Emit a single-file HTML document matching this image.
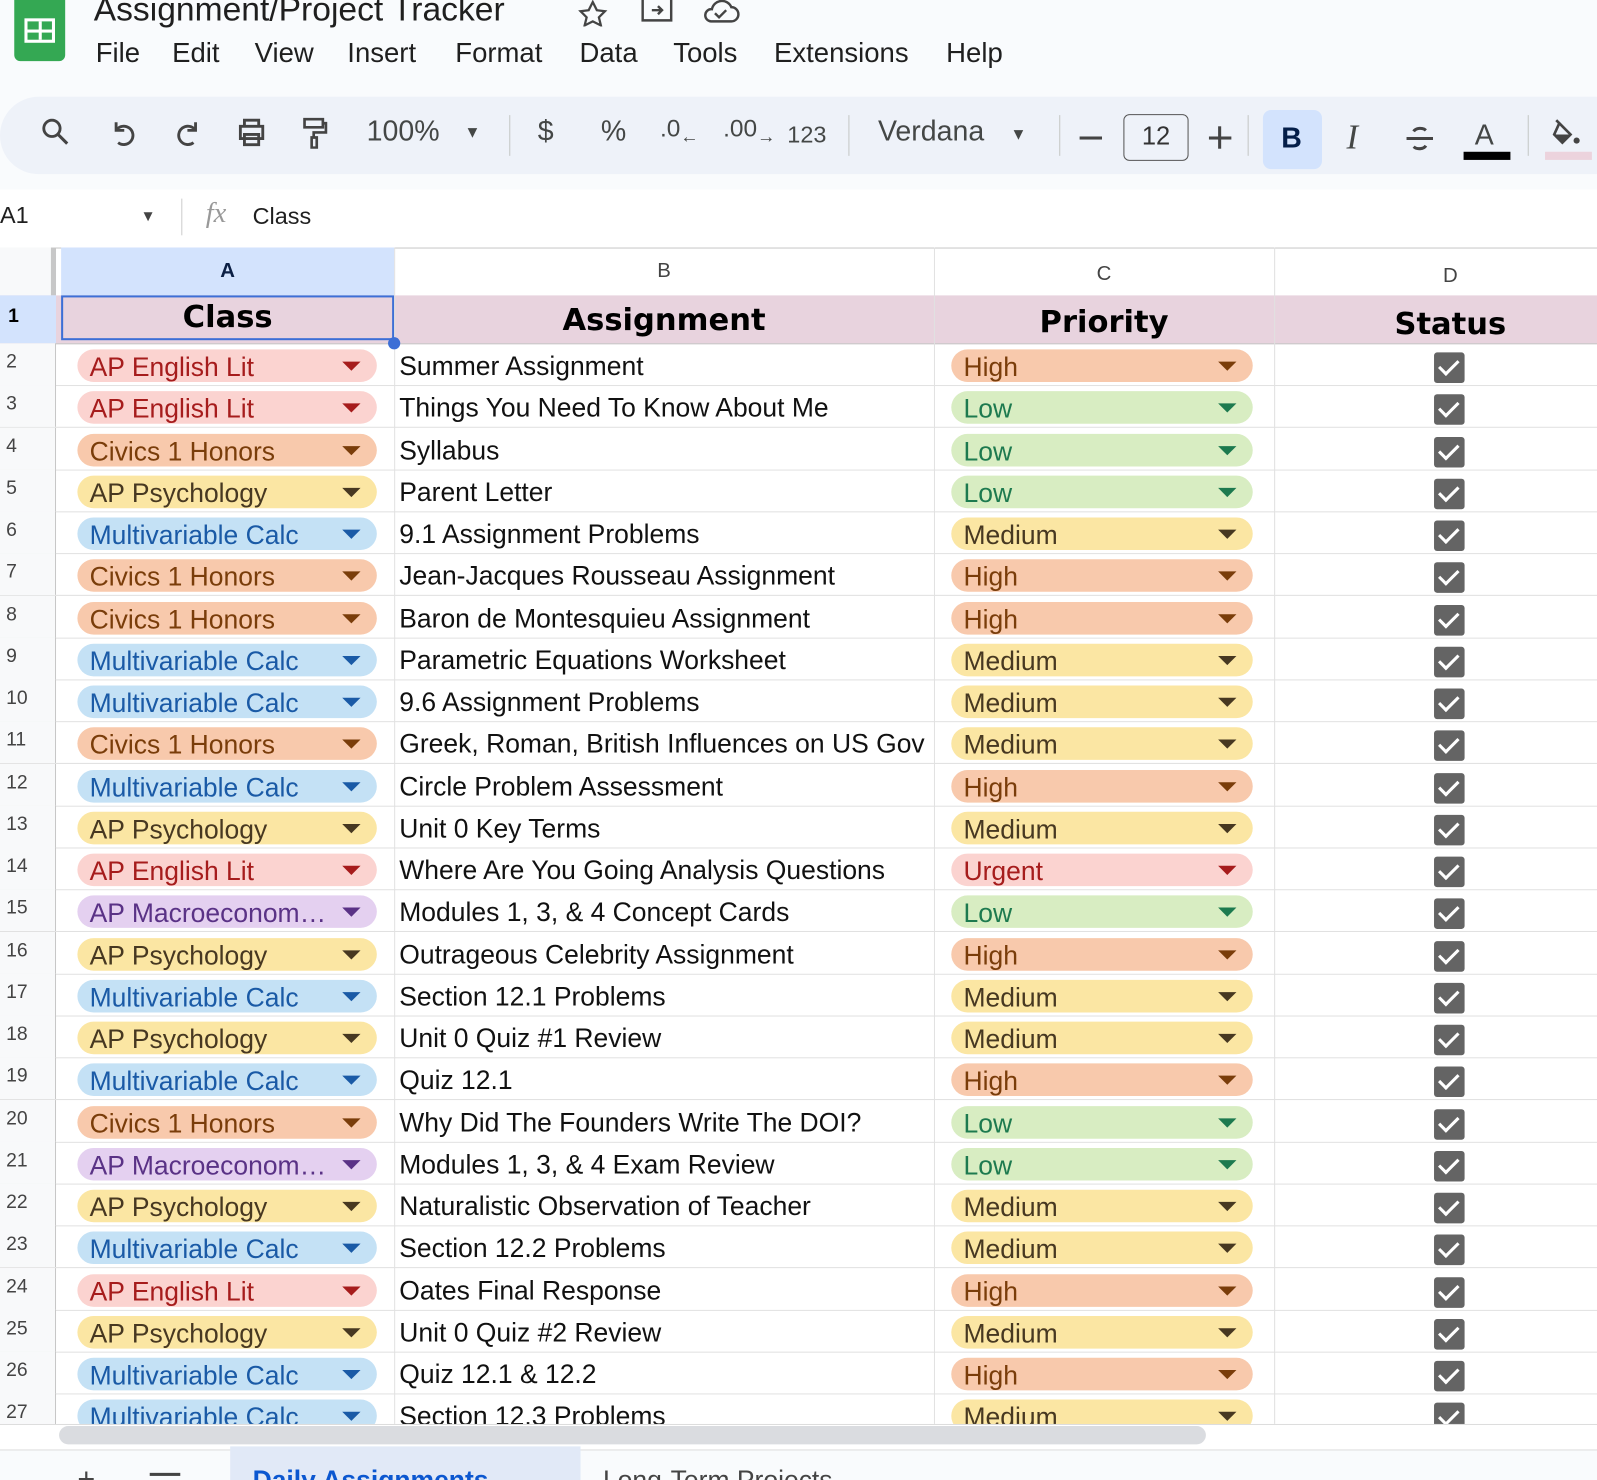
<!DOCTYPE html>
<html><head><meta charset="utf-8">
<style>
html,body{margin:0;padding:0;background:#fff;overflow:hidden;width:1597px;height:1480px}
#w{position:absolute;left:0;top:0;width:1568px;height:1453px;transform:scale(1.01849,1.01858);transform-origin:0 0;font-family:"Liberation Sans",Arial,sans-serif;background:#f9fbfd;overflow:hidden}
.abs{position:absolute}
.mn{position:absolute;top:37px;font-size:27px;color:#1f1f1f}
.tb{position:absolute;top:95px;left:0;width:1568px;height:76px;background:#eef2f9;border-radius:38px 0 0 38px}
.ic{position:absolute;top:113px;font-size:28px;color:#444746}
.sv{position:absolute;top:114px;width:32px;height:32px}
.sep{position:absolute;top:113px;width:1px;height:40px;background:#c4c7c5}
#grid{position:absolute;left:0;top:243px;width:1568px;height:1155px;background:#fff;overflow:hidden}
.r{position:absolute;left:0;width:1568px;height:41px;border-bottom:1px solid #e1e1e1}
.n{position:absolute;left:0;width:55px;height:100%;background:#f8f9fa;border-right:1px solid #c7c7c7;font-size:19px;color:#444;line-height:38px;padding-left:6px;box-sizing:border-box}
.a,.c{position:absolute;top:6px;height:32px;border-radius:16px;font-size:26px;line-height:34px;padding-left:12px;box-sizing:border-box;white-space:nowrap}
.a{left:76px;width:294px}
.c{left:934px;width:296px}
.a:after,.c:after{content:"";position:absolute;right:16px;top:12px;border-left:9px solid transparent;border-right:9px solid transparent;border-top:9px solid currentColor}
.b{position:absolute;left:392px;top:2px;font-size:26px;line-height:41px;color:#111;white-space:nowrap}
.d{position:absolute;left:1408px;top:9px;width:30px;height:30px;background:#646464;border-radius:3px}
.d:after{content:"";position:absolute;left:9px;top:3px;width:8px;height:16px;border-right:3px solid #fff;border-bottom:3px solid #fff;transform:rotate(45deg)}
.vl{position:absolute;top:0;width:1px;height:1155px;background:#e1e1e1}
.red{background:#fbd3d0;color:#a61c1c}
.org{background:#f8c9ac;color:#7a3d0a}
.yel{background:#fbe6a3;color:#473821}
.blu{background:#c4e1f5;color:#1a5aa6}
.pur{background:#e4d0f0;color:#5a3286}
.grn{background:#d8edc2;color:#1d7a4f}
</style></head><body><div id="w">
<div class="abs" style="left:14px;top:0;width:50px;height:60px;background:#34a853;border-radius:0 0 6px 6px"></div>
<div class="abs" style="left:24px;top:18px;width:30px;height:24px;border:3px solid #fff;box-sizing:border-box;background:linear-gradient(#fff,#fff) 50% 0/3px 100% no-repeat,linear-gradient(#fff,#fff) 0 50%/100% 3px no-repeat"></div>
<div class="abs" style="left:92px;top:-10px;font-size:33px;color:#1f1f1f">Assignment/Project Tracker</div>
<svg class="abs" style="left:566px;top:0" width="32" height="26" viewBox="0 0 32 26"><path d="M16 2l4 8 8 1-6 6 2 8-8-4-8 4 2-8-6-6 8-1z" fill="none" stroke="#444" stroke-width="2.2"/></svg>
<svg class="abs" style="left:628px;top:0" width="34" height="24" viewBox="0 0 34 24"><path d="M3 0v20h28V0M12 10h10M18 6l4 4-4 4" fill="none" stroke="#444" stroke-width="2.4"/></svg>
<svg class="abs" style="left:688px;top:0" width="40" height="24" viewBox="0 0 40 24"><path d="M10 21h20a7 7 0 0 0 0-14a10 10 0 0 0-19 2a6 6 0 0 0-1 12zM14 13l4 4 7-7" fill="none" stroke="#444" stroke-width="2.4"/></svg>
<div class="mn" style="left:94px">File</div><div class="mn" style="left:169px">Edit</div><div class="mn" style="left:250px">View</div><div class="mn" style="left:341px">Insert</div><div class="mn" style="left:447px">Format</div><div class="mn" style="left:569px">Data</div><div class="mn" style="left:661px">Tools</div><div class="mn" style="left:760px">Extensions</div><div class="mn" style="left:929px">Help</div>
<div class="tb"></div>
<svg class="sv" style="left:38px" viewBox="0 0 32 32"><circle cx="13" cy="12" r="8" fill="none" stroke="#444" stroke-width="2.8"/><path d="M19 18l9 9" stroke="#444" stroke-width="3"/></svg>
<svg class="sv" style="left:106px" viewBox="0 0 32 32"><path d="M8 6v8h8M8 14a9 9 0 1 1 2 12" fill="none" stroke="#444" stroke-width="2.8"/></svg>
<svg class="sv" style="left:168px" viewBox="0 0 32 32"><path d="M24 6v8h-8M24 14a9 9 0 1 0-2 12" fill="none" stroke="#444" stroke-width="2.8"/></svg>
<svg class="sv" style="left:231px" viewBox="0 0 32 32"><path d="M9 10V4h14v6M5 10h22v12H5zM9 18h14v10H9z" fill="none" stroke="#444" stroke-width="2.8"/></svg>
<svg class="sv" style="left:293px" viewBox="0 0 32 32"><path d="M6 3h18v8H6zM24 7h3v9H15v5M13 21h5v10h-5z" fill="none" stroke="#444" stroke-width="2.6"/></svg>
<div class="ic" style="left:360px">100%</div>
<div class="ic" style="left:456px;font-size:16px;top:122px">▼</div>
<div class="sep" style="left:500px"></div>
<div class="ic" style="left:528px">$</div>
<div class="ic" style="left:590px">%</div>
<div class="ic" style="left:648px;font-size:24px">.0<sub style="font-size:18px">←</sub></div>
<div class="ic" style="left:710px;font-size:24px">.00<sub style="font-size:18px">→</sub></div>
<div class="ic" style="left:773px;font-size:23px;top:119px">123</div>
<div class="sep" style="left:833px"></div>
<div class="ic" style="left:862px">Verdana</div>
<div class="ic" style="left:992px;font-size:16px;top:124px">▼</div>
<div class="sep" style="left:1040px"></div>
<div class="abs" style="left:1060px;top:134px;width:22px;height:3px;background:#444"></div>
<div class="abs" style="left:1103px;top:112px;width:64px;height:46px;border:1.5px solid #555;border-radius:6px;box-sizing:border-box;font-size:25px;text-align:center;line-height:43px;color:#333">12</div>
<div class="abs" style="left:1187px;top:134px;width:22px;height:3px;background:#444"></div>
<div class="abs" style="left:1196px;top:124px;width:3px;height:22px;background:#444"></div>
<div class="sep" style="left:1225px"></div>
<div class="abs" style="left:1240px;top:108px;width:58px;height:58px;background:#d3e3fd;border-radius:8px"></div>
<div class="ic" style="left:1258px;font-weight:bold;color:#041e49;top:120px">B</div>
<div class="ic" style="left:1322px;font-style:italic;font-family:'Liberation Serif',serif;font-size:34px;top:117px">I</div>
<svg class="sv" style="left:1378px;top:120px" viewBox="0 0 32 32"><path d="M22 8a7 5 0 0 0-12 1M10 24a7 5 0 0 0 12-1M3 16h26" fill="none" stroke="#444" stroke-width="3"/></svg>
<div class="ic" style="left:1448px;top:117px">A</div>
<div class="abs" style="left:1437px;top:149px;width:46px;height:8px;background:#000"></div>
<div class="sep" style="left:1500px"></div>
<svg class="sv" style="left:1522px;top:114px" viewBox="0 0 32 32"><path d="M6 4l4 4M9 7l11 11-8 8-8-8z" fill="none" stroke="#444" stroke-width="2.6"/><path d="M4 18h16l-8 8z" fill="#444"/><circle cx="26" cy="24" r="3" fill="#444"/></svg>
<div class="abs" style="left:1517px;top:149px;width:46px;height:8px;background:#ecd3dd"></div>
<div class="abs" style="left:0;top:186px;width:1568px;height:57px;background:#fff"></div>
<div class="abs" style="left:0;top:198px;font-size:23px;color:#1f1f1f">A1</div>
<div class="abs" style="left:138px;top:204px;font-size:15px;color:#444">▼</div>
<div class="abs" style="left:178px;top:195px;width:1px;height:36px;background:#ccc"></div>
<div class="abs" style="left:202px;top:194px;font-size:28px;color:#999;font-style:italic;font-family:'Liberation Serif',serif">fx</div>
<div class="abs" style="left:248px;top:199px;font-size:23px;color:#1f1f1f">Class</div>
<div id="grid">
 <div class="abs" style="left:0;top:0;width:1568px;height:47px;background:#fff;border-bottom:1px solid #c7c7c7;border-top:1px solid #c7c7c7"></div>
 <div class="abs" style="left:0;top:0;width:55px;height:47px;background:#f8f9fa;border-right:5px solid #c7c7c7;box-sizing:border-box"></div>
 <div class="abs" style="left:60px;top:0;width:327px;height:47px;background:#d3e3fd;color:#0b1f44;font-weight:bold;font-size:20px;text-align:center;line-height:47px">A</div>
 <div class="abs" style="left:387px;top:0;width:530px;height:47px;text-align:center;line-height:47px;font-size:20px;color:#444">B</div>
 <div class="abs" style="left:917px;top:0;width:334px;height:47px;text-align:center;line-height:52px;font-size:20px;color:#444">C</div>
 <div class="abs" style="left:1251px;top:0;width:346px;height:47px;text-align:center;line-height:56px;font-size:20px;color:#444">D</div>
 <div class="abs" style="left:0;top:47px;width:1568px;height:47px;background:#e8d3de;border-bottom:1px solid #c7c7c7;font-family:'DejaVu Sans',Verdana,sans-serif;font-weight:bold;font-size:30px;color:#000">
  <div class="abs" style="left:0;width:55px;height:47px;background:#d3e3fd;font-family:'Liberation Sans';font-size:19px;line-height:42px;padding-left:8px;box-sizing:border-box">1</div>
  <div class="abs" style="left:60px;top:0;width:327px;height:44px;border:2px solid #3d6fd6;box-sizing:border-box;text-align:center;line-height:40px">Class</div>
  <div class="abs" style="left:387px;width:530px;text-align:center;line-height:50px">Assignment</div>
  <div class="abs" style="left:917px;width:334px;text-align:center;line-height:54px">Priority</div>
  <div class="abs" style="left:1251px;width:346px;text-align:center;line-height:58px">Status</div>
 </div>
 <div class="abs" style="left:381px;top:88px;width:12px;height:12px;border-radius:50%;background:#3d6fd6;z-index:3"></div>
 <div style="position:absolute;left:0;top:94px;width:1568px">
<div class="r" style="top:0"><div class="n">2</div><div class="a red">AP English Lit</div><div class="b">Summer Assignment</div><div class="c org">High</div><div class="d"></div></div>
<div class="r" style="top:41px"><div class="n">3</div><div class="a red">AP English Lit</div><div class="b">Things You Need To Know About Me</div><div class="c grn">Low</div><div class="d"></div></div>
<div class="r" style="top:83px"><div class="n">4</div><div class="a org">Civics 1 Honors</div><div class="b">Syllabus</div><div class="c grn">Low</div><div class="d"></div></div>
<div class="r" style="top:124px"><div class="n">5</div><div class="a yel">AP Psychology</div><div class="b">Parent Letter</div><div class="c grn">Low</div><div class="d"></div></div>
<div class="r" style="top:165px"><div class="n">6</div><div class="a blu">Multivariable Calc</div><div class="b">9.1 Assignment Problems</div><div class="c yel">Medium</div><div class="d"></div></div>
<div class="r" style="top:206px"><div class="n">7</div><div class="a org">Civics 1 Honors</div><div class="b">Jean-Jacques Rousseau Assignment</div><div class="c org">High</div><div class="d"></div></div>
<div class="r" style="top:248px"><div class="n">8</div><div class="a org">Civics 1 Honors</div><div class="b">Baron de Montesquieu Assignment</div><div class="c org">High</div><div class="d"></div></div>
<div class="r" style="top:289px"><div class="n">9</div><div class="a blu">Multivariable Calc</div><div class="b">Parametric Equations Worksheet</div><div class="c yel">Medium</div><div class="d"></div></div>
<div class="r" style="top:330px"><div class="n">10</div><div class="a blu">Multivariable Calc</div><div class="b">9.6 Assignment Problems</div><div class="c yel">Medium</div><div class="d"></div></div>
<div class="r" style="top:371px"><div class="n">11</div><div class="a org">Civics 1 Honors</div><div class="b">Greek, Roman, British Influences on US Gov</div><div class="c yel">Medium</div><div class="d"></div></div>
<div class="r" style="top:413px"><div class="n">12</div><div class="a blu">Multivariable Calc</div><div class="b">Circle Problem Assessment</div><div class="c org">High</div><div class="d"></div></div>
<div class="r" style="top:454px"><div class="n">13</div><div class="a yel">AP Psychology</div><div class="b">Unit 0 Key Terms</div><div class="c yel">Medium</div><div class="d"></div></div>
<div class="r" style="top:495px"><div class="n">14</div><div class="a red">AP English Lit</div><div class="b">Where Are You Going Analysis Questions</div><div class="c red">Urgent</div><div class="d"></div></div>
<div class="r" style="top:536px"><div class="n">15</div><div class="a pur">AP Macroeconom…</div><div class="b">Modules 1, 3, &amp; 4 Concept Cards</div><div class="c grn">Low</div><div class="d"></div></div>
<div class="r" style="top:578px"><div class="n">16</div><div class="a yel">AP Psychology</div><div class="b">Outrageous Celebrity Assignment</div><div class="c org">High</div><div class="d"></div></div>
<div class="r" style="top:619px"><div class="n">17</div><div class="a blu">Multivariable Calc</div><div class="b">Section 12.1 Problems</div><div class="c yel">Medium</div><div class="d"></div></div>
<div class="r" style="top:660px"><div class="n">18</div><div class="a yel">AP Psychology</div><div class="b">Unit 0 Quiz #1 Review</div><div class="c yel">Medium</div><div class="d"></div></div>
<div class="r" style="top:701px"><div class="n">19</div><div class="a blu">Multivariable Calc</div><div class="b">Quiz 12.1</div><div class="c org">High</div><div class="d"></div></div>
<div class="r" style="top:743px"><div class="n">20</div><div class="a org">Civics 1 Honors</div><div class="b">Why Did The Founders Write The DOI?</div><div class="c grn">Low</div><div class="d"></div></div>
<div class="r" style="top:784px"><div class="n">21</div><div class="a pur">AP Macroeconom…</div><div class="b">Modules 1, 3, &amp; 4 Exam Review</div><div class="c grn">Low</div><div class="d"></div></div>
<div class="r" style="top:825px"><div class="n">22</div><div class="a yel">AP Psychology</div><div class="b">Naturalistic Observation of Teacher</div><div class="c yel">Medium</div><div class="d"></div></div>
<div class="r" style="top:866px"><div class="n">23</div><div class="a blu">Multivariable Calc</div><div class="b">Section 12.2 Problems</div><div class="c yel">Medium</div><div class="d"></div></div>
<div class="r" style="top:908px"><div class="n">24</div><div class="a red">AP English Lit</div><div class="b">Oates Final Response</div><div class="c org">High</div><div class="d"></div></div>
<div class="r" style="top:949px"><div class="n">25</div><div class="a yel">AP Psychology</div><div class="b">Unit 0 Quiz #2 Review</div><div class="c yel">Medium</div><div class="d"></div></div>
<div class="r" style="top:990px"><div class="n">26</div><div class="a blu">Multivariable Calc</div><div class="b">Quiz 12.1 &amp; 12.2</div><div class="c org">High</div><div class="d"></div></div>
<div class="r" style="top:1031px"><div class="n">27</div><div class="a blu">Multivariable Calc</div><div class="b">Section 12.3 Problems</div><div class="c yel">Medium</div><div class="d"></div></div>
 </div>
 <div class="vl" style="left:387px;top:0"></div>
 <div class="vl" style="left:917px;top:0"></div>
 <div class="vl" style="left:1251px;top:0"></div>
</div>
<div class="abs" style="left:0;top:1398px;width:1568px;height:24px;background:#fff;border-top:1px solid #ddd"></div>
<div class="abs" style="left:58px;top:1400px;width:1126px;height:18px;background:#dadce0;border-radius:9px"></div>
<div class="abs" style="left:0;top:1423px;width:1568px;height:30px;background:#f9fbfd;border-top:1px solid #ddd"></div>
<div class="abs" style="left:226px;top:1420px;width:344px;height:33px;background:#e1e9f7"></div>
<div class="abs" style="left:76px;top:1436px;font-size:30px;color:#444">+</div>
<div class="abs" style="left:147px;top:1446px;width:30px;height:3px;background:#444"></div>
<div class="abs" style="left:248px;top:1438px;font-size:26px;color:#0b57d0;font-weight:bold">Daily Assignments</div>
<div class="abs" style="left:592px;top:1438px;font-size:26px;color:#444">Long-Term Projects</div>
</div></body></html>
